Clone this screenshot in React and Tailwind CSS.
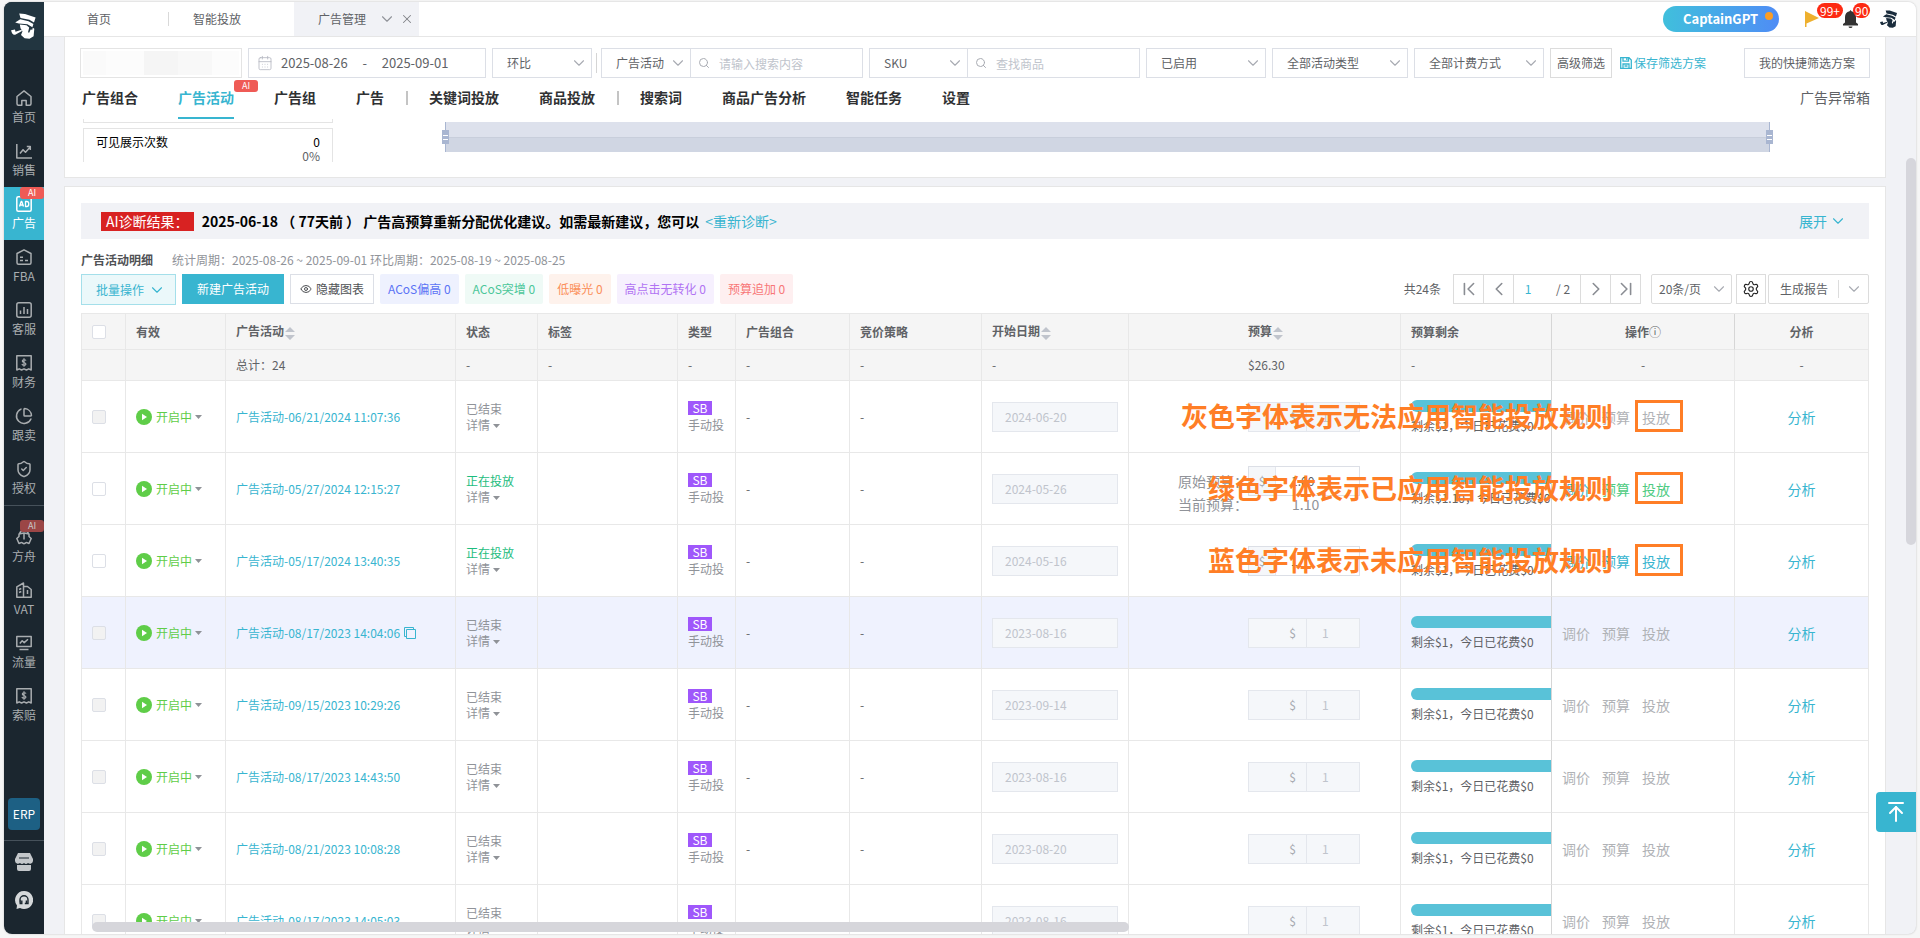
import { useState } from "react";
import {
    ArrowUpToLine,
    CalendarDays,
    ChartPie,
    ChevronDown,
    ChevronFirst,
    ChevronLast,
    ChevronLeft,
    ChevronRight,
    Eye,
    Search,
    Settings,
    ShieldCheck,
    X,
} from "lucide-react";

const campaigns = [
    { name: "广告活动-06/21/2024 11:07:36", date: "2024-06-20", budget: "1", left: "1", note: "灰色字体表示无法应用智能投放规则" },
    { name: "广告活动-05/27/2024 12:15:27", date: "2024-05-26", budget: "1.00", left: "1.10", current: "1.10", running: true, rule: "applied", note: "绿色字体表示已应用智能投放规则" },
    { name: "广告活动-05/17/2024 13:40:35", date: "2024-05-16", budget: "1", left: "1", running: true, rule: "available", note: "蓝色字体表示未应用智能投放规则" },
    { name: "广告活动-08/17/2023 14:04:06", date: "2023-08-16", budget: "1", left: "1", hovered: true },
    { name: "广告活动-09/15/2023 10:29:26", date: "2023-09-14", budget: "1", left: "1" },
    { name: "广告活动-08/17/2023 14:43:50", date: "2023-08-16", budget: "1", left: "1" },
    { name: "广告活动-08/21/2023 10:08:28", date: "2023-08-20", budget: "1", left: "1" },
    { name: "广告活动-08/17/2023 14:05:03", date: "2023-08-16", budget: "1", left: "1" },
];

const mainMenu = [
    { label: "首页", icon: "home" },
    { label: "销售", icon: "sales" },
    { label: "广告", icon: "ad", active: true, ai: true },
    { label: "FBA", icon: "fba" },
    { label: "客服", icon: "bars" },
    { label: "财务", icon: "bill" },
    { label: "跟卖", icon: "pie" },
    { label: "授权", icon: "shield" },
];

const toolMenu = [
    { label: "方舟", icon: "ark", ai: true },
    { label: "VAT", icon: "building" },
    { label: "流量", icon: "monitor" },
    { label: "索赔", icon: "bill" },
];

const adTabs = ["广告组合", "广告活动", "广告组", "广告", "|", "关键词投放", "商品投放", "|", "搜索词", "商品广告分析", "智能任务", "设置"];

const quickFilters = [
    { label: "ACoS偏高 0", tone: "bg-[#eef1fe] text-[#5b73f5]" },
    { label: "ACoS突增 0", tone: "bg-[#effaf6] text-[#4cc79a]" },
    { label: "低曝光 0", tone: "bg-[#fef2ec] text-[#fb8f5a]" },
    { label: "高点击无转化 0", tone: "bg-[#f6f0fe] text-[#b173f3]" },
    { label: "预算追加 0", tone: "bg-[#feeff0] text-[#f87777]" },
];

const columnWidths = ["w-[44px]", "w-[100px]", "w-[230px]", "w-[82px]", "", "w-[58px]", "w-[114px]", "w-[132px]", "w-[147px]", "w-[272px]", "w-[151px]", "w-[183px]", "w-[134px]"];

function CaptainLogo({ className }) {
    return (
        <svg viewBox="0 0 26 26" className={className} fill="currentColor" aria-hidden="true">
            <path d="M8.2.6 14 .9l10.600 3.500-1.600 5-4.600-2.600L9.500 5z" />
            <path d="M9.200 6.200l8.300 2.100 4.900 2.700-1 3.300-5-3-8.600-.9-3.600-.9z" />
            <path d="M8.800 11.600l6.700.7 2.700 2.300-1.100 4.300.9 1 1.700-3.300 1.600.2.500-2 1.500.9-.7 7.600-4.100 2.500-4.900-.6-3.600-3.100 1.500-3.800-2-3z" />
            <path d="M.1 17.200l3.900-.6.500 2.100 6-1.900.5 1.200-6.300 3.400C2.400 22.500.6 20.400.1 17.200z" />
        </svg>
    );
}

function MenuIcon({ name }) {
    if (name === "pie") return <ChartPie className="size-[18px]" strokeWidth={2} />;
    if (name === "shield") return <ShieldCheck className="size-[18px]" strokeWidth={2} />;

    return (
        <svg viewBox="0 0 16 16" className="my-px size-4" fill="none" stroke="currentColor" strokeWidth="1.500" strokeLinejoin="round" aria-hidden="true">
            {name === "home" && <path d="M10.200 15.200h3.300a1.500 1.500 0 0 0 1.500-1.500V6.500L8 .9 1 6.500v7.200a1.500 1.500 0 0 0 1.500 1.500h3.300v-4.700h4.400z" />}
            {name === "sales" && <path d="M.8 1v14H16M4 10.500l3-3.800 2.500 2.500 4.500-5M10.800 3.500h3.500V7" />}
            {name === "ad" && (
                <>
                    <rect x=".8" y=".8" width="14.400" height="14.400" rx="1.500" />
                    <path d="M3.500 10.500 5.200 5.500h.6l1.700 5M4 9h3M9.500 5.500v5h1.200a2 2 0 0 0 2-2v-1a2 2 0 0 0-2-2z" strokeWidth="1.300" />
                </>
            )}
            {name === "fba" && <path d="M1 4.500 8 .8l7 3.700v9.200a1.500 1.500 0 0 1-1.500 1.500h-11A1.500 1.500 0 0 1 1 13.700zM4 8.200h3M4 11.500h3M9 11.500h3" />}
            {name === "bars" && (
                <>
                    <rect x=".8" y=".8" width="14.400" height="14.400" rx="2" />
                    <path d="M4.500 8.500v3.500M8 5v7M11.500 7v5" />
                </>
            )}
            {name === "bill" && (
                <>
                    <path d="M.8 15V.8h14.400V15l-2.400-1.200-2.400 1.200L8 13.800 5.600 15l-2.400-1.200z" />
                    <path d="M10 5.500C9.500 4.500 6.300 4.300 6.300 6s3.600 1.300 3.600 3.100-3.400 1.600-4-.1M8 3.300v8.400" strokeWidth="1.200" />
                </>
            )}
            {name === "ark" && <path d="M8 4v6.500M3.500 5C4.500.2 11.500.2 12.500 5M8 4 3 5v2.500L.8 9.500 3 14.500c1.300 0 1.500-1 2.500-1s1.500 1.200 2.500 1.200 1.500-1.200 2.500-1.200 1.200 1 2.500 1l2.200-5L13 7.500V5z" />}
            {name === "building" && <path d="M.8 15.200V4.800L7.500 1v14.200zM7.500 4.500h4l3.700 3v7.700H7.500M3 7.500l2.300-1M3 10.500l2.300-1M11.500 8v4" />}
            {name === "monitor" && <path d="M.8 1.500h14.400v10H.8zM3.800 8.500l2.400-2.700 2 1.800 3.800-3.400M3.500 14.500h9" />}
        </svg>
    );
}

function MenuItem({ item }) {
    return (
        <a
            href="#"
            className={`relative flex h-[53px] flex-col items-center pt-2 text-xs ${
                item.active ? "bg-[#38b5d0] text-white" : "text-[#a9adb0]"
            }`}
        >
            {item.ai && (
                <span
                    className={`absolute top-0 right-0 h-3 w-6 rounded-[3px] text-center text-[9px] leading-3 ${
                        item.active ? "bg-[#ef5b56] text-white" : "bg-[#9b4646] text-[#c9c9c9]"
                    }`}
                >
                    AI
                </span>
            )}
            <MenuIcon name={item.icon} />
            <span className="mt-0.5 leading-4">{item.label}</span>
        </a>
    );
}

function Sidebar() {
    return (
        <aside className="flex w-10 shrink-0 flex-col bg-[#1b262f]">
            <div className="flex h-12 items-center justify-center bg-[#223540] text-white">
                <CaptainLogo className="size-[26px]" />
            </div>
            <nav className="mt-[31px] flex flex-col">
                {mainMenu.map((item) => (
                    <MenuItem key={item.label} item={item} />
                ))}
                <hr className="mb-3.5 border-[#46515a]" />
                {toolMenu.map((item) => (
                    <MenuItem key={item.label} item={item} />
                ))}
            </nav>
            <div className="mt-auto flex flex-col items-center pb-[25px]">
                <button className="size-8 rounded bg-[#1d6084] text-xs text-white">ERP</button>
                <hr className="mt-2.5 w-full border-[#46515a]" />
                <svg viewBox="0 0 18 18" className="mt-3 size-[18px] text-[#c3c7ca]" aria-hidden="true">
                    <path d="M3 0h12l3 6v2a3 3 0 0 1-5 2 3 3 0 0 1-4 0 3 3 0 0 1-4 0 3 3 0 0 1-5-2V6zM2 12h14v4a2 2 0 0 1-2 2H4a2 2 0 0 1-2-2z" fill="currentColor" />
                    <path d="M4 5h10" stroke="#1b262f" strokeWidth="1.200" />
                </svg>
                <svg viewBox="0 0 18 18" className="mt-5 size-[18px] text-[#d5d8da]" aria-hidden="true">
                    <path d="M9 0a9 9 0 1 1-4 17l-3.500 1 .5-3.500A9 9 0 0 1 9 0z" fill="currentColor" />
                    <path d="M5 11.500V8.800a4 4 0 0 1 8 0v3.700H9.800M5.200 9v3.500h1.600V9.500M11.400 9.500v2.500" fill="none" stroke="#1b262f" strokeWidth="1.400" />
                </svg>
            </div>
        </aside>
    );
}

function TopBar() {
    return (
        <header className="flex h-[35px] shrink-0 items-stretch border-b border-[#e6e6e6] bg-white text-xs text-[#606266]">
            <a href="#" className="my-2.5 flex w-[125px] items-center border-r border-[#d9d9d9] pl-[43px]">首页</a>
            <a href="#" className="flex w-[125px] items-center pl-6">智能投放</a>
            <div className="flex w-[125px] items-center bg-[#f1f2f6] pl-6">
                <a href="#">广告管理</a>
                <button aria-label="展开标签" className="ml-3"><ChevronDown className="size-[18px] text-[#909399]" strokeWidth={1.5} /></button>
                <button aria-label="关闭标签" className="ml-1"><X className="size-3.5 text-[#808288]" strokeWidth={1.75} /></button>
            </div>
            <div className="ml-auto flex items-center pr-[18px]">
                <button className="relative flex h-[26px] w-[116px] items-center rounded-full bg-linear-to-r from-[#40bfdc] to-[#4f8cf5] pl-5 text-[13px] font-bold text-white">
                    CaptainGPT
                    <span className="absolute top-1.5 right-1.5 size-2 rounded-full bg-[#fb9d25]" />
                </button>
                <button aria-label="旗标" className="relative ml-[26px]">
                    <svg viewBox="0 0 14 16" className="h-4 w-3.5" aria-hidden="true">
                        <path d="M0 0l14 7L1.500 12.500V16H0z" fill="#eeb02e" />
                    </svg>
                    <span className="absolute -top-2 left-3 h-[15px] rounded-full bg-[#fd2a12] px-[3px] text-xs leading-[15px] text-white">99+</span>
                </button>
                <button aria-label="通知" className="relative ml-6">
                    <svg viewBox="0 0 15 18" className="h-[18px] w-[15px]" fill="#333" aria-hidden="true">
                        <path d="M7.500 0l1 1.200c3 .5 4.500 2.800 4.500 5.800v5.500l2 1.500v1.500H0V14l2-1.500V7c0-3 1.500-5.300 4.500-5.800zM5.500 16.500h4a2 1.500 0 0 1-4 0z" />
                    </svg>
                    <span className="absolute -top-[7px] left-2.5 h-[15px] rounded-full bg-[#fd2a12] px-0.5 text-xs leading-[15px] text-white">90</span>
                </button>
                <CaptainLogo className="ml-[22px] size-[18px] text-[#1a2c3c]" />
            </div>
        </header>
    );
}

function Select({ label, className }) {
    return (
        <div className={`relative ${className}`}>
            <select aria-label={label} className="h-[30px] w-full appearance-none border border-[#dcdfe6] bg-white pr-6 pl-3.5 text-xs text-[#606266]">
                <option>{label}</option>
            </select>
            <ChevronDown className="pointer-events-none absolute top-1.5 right-1 size-[18px] text-[#a8abb2]" strokeWidth={1.5} />
        </div>
    );
}

function SearchBox({ placeholder }) {
    return (
        <div className="relative -ml-px w-[173px]">
            <Search className="absolute top-[9px] left-2 size-3 text-[#a8abb2]" strokeWidth={2} />
            <input
                aria-label={placeholder}
                placeholder={placeholder}
                className="h-[30px] w-full border border-[#dcdfe6] pl-7 text-xs placeholder:text-[#c0c4cc]"
            />
        </div>
    );
}

function FilterBar() {
    return (
        <div className="flex items-center gap-1.5 text-xs text-[#606266]">
            <button aria-label="店铺" className="h-[30px] w-[162px] border border-[#e4e4e4] p-0.5">
                <span className="flex h-full">
                    <span className="w-[15%] bg-[#fafafa]" />
                    <span className="w-[24%] bg-[#fcfcfc]" />
                    <span className="w-[22%] bg-[#f5f5f5]" />
                    <span className="w-[22%] bg-[#f8f8f8]" />
                    <span className="flex-1 bg-[#fcfcfc]" />
                </span>
            </button>
            <button className="flex h-[30px] w-[238px] items-center border border-[#dcdfe6] pl-2 text-[13px]">
                <CalendarDays className="size-4 text-[#b4b7c0]" strokeWidth={1.25} />
                <span className="ml-2">2025-08-26</span>
                <span className="w-[34px] text-center">-</span>
                <span>2025-09-01</span>
            </button>
            <Select label="环比" className="w-[100px]" />
            <span className="-mx-0.5 h-5 w-px bg-[#d5d5d5]" />
            <div className="flex">
                <Select label="广告活动" className="w-[90px]" />
                <SearchBox placeholder="请输入搜索内容" />
            </div>
            <div className="flex">
                <Select label="SKU" className="w-[99px]" />
                <SearchBox placeholder="查找商品" />
            </div>
            <Select label="已启用" className="w-[120px]" />
            <Select label="全部活动类型" className="w-[136px]" />
            <Select label="全部计费方式" className="w-[130px]" />
            <button className="h-[30px] border border-[#dcdcdc] px-1.5">高级筛选</button>
            <button className="ml-0.5 flex items-center gap-0.5 text-[#38b5d0]">
                <svg viewBox="0 0 12 12" className="size-3" fill="none" stroke="currentColor" strokeWidth="1.300" aria-hidden="true">
                    <path d="M.7.7H9l2.300 2.300v8.300H.7zM3 .7v3.500h5.500V.7M3 11V7h6v4M4.500 9h3M6.800 1v2" />
                </svg>
                保存筛选方案
            </button>
            <button className="ml-auto h-[30px] w-[126px] border border-[#dcdfe6]">我的快捷筛选方案</button>
        </div>
    );
}

function AdTabs() {
    return (
        <div className="mt-1.5 flex h-[35px] items-center pl-0.5 text-sm">
            {adTabs.map((tab, i) =>
                tab === "|" ? (
                    <span key={i} className="mr-[21px] -ml-[18px] h-3.5 w-0.5 -translate-y-1 bg-[#c4c4c4]" />
                ) : (
                    <a
                        key={tab}
                        href="#"
                        className={`relative mr-10 h-full leading-[26px] font-bold ${
                            tab === "广告活动" ? "border-b-2 border-[#38b5d0] text-[#38b5d0]" : "text-[#303133]"
                        }`}
                    >
                        {tab}
                        {tab === "广告活动" && (
                            <span className="absolute -top-1 left-full h-3 w-6 rounded-[3px] bg-[#ef5b56] text-center text-[9px] leading-3 font-normal text-white">AI</span>
                        )}
                    </a>
                )
            )}
            <a href="#" className="ml-auto h-full leading-[26px] text-[#606266]">广告异常箱</a>
        </div>
    );
}

function ZoomHandle() {
    return (
        <span className="z-10 flex h-3.5 w-[7px] flex-col items-center justify-center gap-[3px] bg-[#a9b6d1]">
            <span className="h-px w-[5px] bg-white" />
            <span className="h-px w-[5px] bg-white" />
        </span>
    );
}

function ChartStrip() {
    return (
        <div className="flex h-[43px] items-start overflow-hidden pl-[3px]">
            <div className="w-[250px] shrink-0">
                <div className="h-1 border-x border-b border-[#e4e4e4]" />
                <div className="mt-[5px] h-16 border border-[#e4e4e4] px-3 pt-[5px] text-xs text-black">
                    <div className="flex justify-between leading-4">
                        <span>可见展示次数</span>
                        <span>0</span>
                    </div>
                    <div className="text-right leading-3 text-[#606266]">0%</div>
                </div>
            </div>
            <div className="mt-[3px] mr-[97px] ml-[109px] flex h-[30px] flex-1 items-center">
                <ZoomHandle />
                <div className="-mx-1 flex h-full flex-1 flex-col border-x border-[#a9b6d1] bg-[#dde1ec]">
                    <div className="mt-auto h-[15px] border-t border-[#c8cedb] bg-[#d0d6e3]" />
                </div>
                <ZoomHandle />
            </div>
        </div>
    );
}

function Pagination() {
    const cell = "flex h-full items-center border-l border-[#dcdcdc] text-[#8a8d93]";
    return (
        <div className="ml-auto flex items-center text-xs text-[#606266]">
            <span>共24条</span>
            <div className="ml-3 flex h-[30px] border-y border-r border-[#dcdcdc]">
                <button aria-label="首页" className={`w-[30px] justify-center ${cell}`}><ChevronFirst className="size-[22px]" strokeWidth={1.75} /></button>
                <button aria-label="上一页" className={`w-[30px] justify-center ${cell}`}><ChevronLeft className="size-[22px]" strokeWidth={1.75} /></button>
                <div className={`w-[67px] ${cell}`}>
                    <input aria-label="页码" defaultValue="1" className="w-7 text-center text-xs text-[#38b5d0]" />
                    <span className="ml-3.5 text-[#606266]">/ 2</span>
                </div>
                <button aria-label="下一页" className={`w-[30px] justify-center ${cell}`}><ChevronRight className="size-[22px]" strokeWidth={1.75} /></button>
                <button aria-label="末页" className={`w-[30px] justify-center ${cell}`}><ChevronLast className="size-[22px]" strokeWidth={1.75} /></button>
            </div>
            <div className="relative ml-2.5 w-[81px]">
                <select aria-label="每页条数" className="h-[30px] w-full appearance-none rounded-[2px] border border-[#dcdcdc] pl-[7px]">
                    <option>20条/页</option>
                </select>
                <ChevronDown className="pointer-events-none absolute top-1.5 right-1 size-[18px] text-[#a8abb2]" strokeWidth={1.5} />
            </div>
            <button aria-label="设置" className="ml-1 flex size-[30px] items-center justify-center border border-[#dcdcdc] text-[#222]">
                <Settings className="size-[18px]" strokeWidth={1.5} />
            </button>
            <button className="ml-0.5 flex h-[30px] w-[101px] items-center rounded-[2px] border border-[#dcdcdc] pl-[11px]">
                生成报告
                <span className="ml-2.5 h-[18px] w-px bg-[#dcdcdc]" />
                <ChevronDown className="ml-1.5 size-[18px] text-[#a8abb2]" strokeWidth={1.5} />
            </button>
        </div>
    );
}

function Caret() {
    return (
        <svg viewBox="0 0 7 4" className="ml-[3px] inline-block h-1 w-[7px] align-middle" aria-hidden="true">
            <path d="M0 0h7L3.500 4z" fill="#8f9297" />
        </svg>
    );
}

function SortIcon() {
    return (
        <svg viewBox="0 0 10 13" className="ml-px inline-block h-[13px] w-2.5 align-middle" fill="#c0c4cc" aria-hidden="true">
            <path d="M0 5h10L5 0zM0 8h10l-5 5z" />
        </svg>
    );
}

function Checkbox({ label, disabled }) {
    return (
        <input
            type="checkbox"
            aria-label={label}
            disabled={disabled}
            className="block size-3.5 appearance-none rounded-[2px] border border-[#dcdfe6] bg-white disabled:bg-[#f2f2f2]"
        />
    );
}

function BudgetCell({ row, editable }) {
    return (
        <div className="grid grid-cols-[70px_112px] pl-[49px] text-sm leading-4 text-[#909399]">
            <span className="self-center">{row.current && "原始预算："}</span>
            <div className={`flex h-[30px] border text-xs ${editable ? "border-[#dcdfe6] text-[#606266]" : "border-[#e4e7ed] text-[#c0c4cc]"}`}>
                <span
                    className={`flex items-center border-r border-[#e4e7ed] bg-[#f5f7fa] text-[#a8abb2] ${
                        editable ? "w-[27px] justify-center" : "w-[58px] justify-end pr-2.5"
                    }`}
                >
                    $
                </span>
                <input
                    aria-label={`预算 ${row.name}`}
                    defaultValue={row.budget}
                    disabled={!editable}
                    className="min-w-0 flex-1 pl-[15px] disabled:bg-[#f5f7fa]"
                />
            </div>
            {row.current && (
                <>
                    <span>当前预算：</span>
                    <span className="pl-11">{row.current}</span>
                </>
            )}
        </div>
    );
}

function CampaignRow({ row }) {
    const actionTone = row.rule ? "text-[#38b5d0]" : "text-[#b0b2b6]";
    const ruleTone = row.rule === "applied" ? "text-[#4ecb82]" : actionTone;

    return (
        <tr className={row.hovered ? "bg-[#eff2fe]" : "bg-white"}>
            <td><Checkbox label={row.name} disabled={!row.rule} /></td>
            <td>
                <button className="flex items-center text-[#5fcd48]">
                    <svg viewBox="0 0 16 16" className="mr-1 size-4" aria-hidden="true">
                        <circle cx="8" cy="8" r="8" fill="#5fcd48" />
                        <path d="M6 4.800 11 8l-5 3.200z" fill="#fff" />
                    </svg>
                    开启中
                    <Caret />
                </button>
            </td>
            <td>
                <div className="flex items-center gap-1 text-[#38b5d0]">
                    <a href="#">{row.name}</a>
                    {row.hovered && (
                        <button aria-label="复制">
                            <svg viewBox="0 0 12 12" className="size-3" fill="none" stroke="currentColor" aria-hidden="true">
                                <path d="M2.500 2.500h9v9h-9zM9.500 2.500v-2h-9v9h2" />
                            </svg>
                        </button>
                    )}
                </div>
            </td>
            <td className="leading-4 text-[#909399]">
                <div className={row.running ? "text-[#1dbd7e]" : ""}>{row.running ? "正在投放" : "已结束"}</div>
                <button>详情<Caret /></button>
            </td>
            <td />
            <td className="leading-4 text-[#909399]">
                <span className="block w-6 bg-[#9f57fb] text-center leading-3.5 text-white">SB</span>
                <div className="mt-0.5">手动投</div>
            </td>
            <td>-</td>
            <td>-</td>
            <td>
                <input
                    aria-label={`开始日期 ${row.name}`}
                    defaultValue={row.date}
                    disabled
                    className="block h-[30px] w-[126px] border border-[#e4e7ed] bg-[#f5f7fa] pl-3 text-[#c0c4cc]"
                />
            </td>
            <td className="!pl-0"><BudgetCell row={row} editable={Boolean(row.rule)} /></td>
            <td className="overflow-hidden !border-r-[#d6d6d6] whitespace-nowrap">
                <div className="h-3 rounded-l-full bg-[#59c2d8]" />
                <div className="mt-1.5 leading-4">剩余${row.left}，今日已花费$0</div>
            </td>
            <td className="relative">
                <div className={`flex gap-3 text-sm ${actionTone}`}>
                    <button>调价</button>
                    <button className={ruleTone}>预算</button>
                    <button className={ruleTone}>投放</button>
                </div>
                {row.note && (
                    <div className="pointer-events-none absolute inset-y-0 right-[51px] flex items-center gap-[22px] pb-0.5 text-[27px] font-bold whitespace-nowrap text-[#ff7e26]">
                        {row.note}
                        <span className="h-8 w-12 border-3 border-[#ff7e26]" />
                    </div>
                )}
            </td>
            <td className="!pl-0 text-center"><a href="#" className="text-sm text-[#38b5d0]">分析</a></td>
        </tr>
    );
}

function CampaignTable() {
    return (
        <table className="mt-2 w-full table-fixed border-separate border-spacing-0 border-t border-l border-[#e8e8e8] text-left text-xs text-[#606266] [&_td]:border-r [&_td]:border-b [&_td]:border-[#e8e8e8] [&_td]:py-0 [&_td]:pl-2.5 [&_th]:border-r [&_th]:border-b [&_th]:border-[#e8e8e8] [&_th]:py-0 [&_th]:pl-2.5">
            <colgroup>
                {columnWidths.map((width, i) => (
                    <col key={i} className={width} />
                ))}
            </colgroup>
            <thead className="bg-[#f5f5f5]">
                <tr className="h-9">
                    <th><Checkbox label="全选" /></th>
                    <th>有效</th>
                    <th>广告活动<SortIcon /></th>
                    <th>状态</th>
                    <th>标签</th>
                    <th>类型</th>
                    <th>广告组合</th>
                    <th>竞价策略</th>
                    <th>开始日期<SortIcon /></th>
                    <th className="!pl-[119px]">预算<SortIcon /></th>
                    <th className="!border-r-[#d6d6d6]">预算剩余</th>
                    <th className="!border-r-[#d6d6d6] !pl-0 text-center">操作<span className="font-normal">ⓘ</span></th>
                    <th className="!pl-0 text-center">分析</th>
                </tr>
                <tr className="h-[31px]">
                    <td />
                    <td />
                    <td>总计：24</td>
                    <td>-</td>
                    <td>-</td>
                    <td>-</td>
                    <td>-</td>
                    <td>-</td>
                    <td>-</td>
                    <td className="!pl-[119px]">$26.30</td>
                    <td className="!border-r-[#d6d6d6]">-</td>
                    <td className="!pl-0 text-center">-</td>
                    <td className="!pl-0 text-center">-</td>
                </tr>
            </thead>
            <tbody className="[&_tr]:h-[72px]">
                {campaigns.map((row) => (
                    <CampaignRow key={row.name} row={row} />
                ))}
            </tbody>
        </table>
    );
}

export default function App() {
    const [showChart, setShowChart] = useState(true);

    return (
        <div className="h-screen bg-[#f6f6f6] px-1 pt-0.5 pb-1 font-['Noto_Sans_CJK_SC',sans-serif]">
            <div className="relative flex h-full overflow-hidden rounded-lg bg-[#f1f2f6] shadow-[0_0_2px_#bbb]">
                <Sidebar />
                <div className="flex min-w-0 flex-1 flex-col">
                    <TopBar />
                    <main className="flex min-h-0 flex-1 flex-col gap-2 pr-[30px] pl-5">
                        <section className="shrink-0 border-x border-b border-[#e6e6e6] bg-white px-[15px] pt-[11px] pb-[15px]">
                            <FilterBar />
                            <AdTabs />
                            {showChart && <ChartStrip />}
                        </section>

                        <section className="relative min-h-0 flex-1 overflow-hidden border-x border-t border-[#e6e6e6] bg-white px-4 pt-4">
                            <div className="flex h-9 items-center bg-[#f1f2f6] pl-5 text-sm">
                                <span className="bg-[#d82222] px-[5px] leading-[19px] text-white">AI诊断结果：</span>
                                <strong className="ml-2 text-black">2025-06-18 （ 77天前 ） 广告高预算重新分配优化建议。如需最新建议，您可以</strong>
                                <a href="#" className="ml-1.5 text-[#38b5d0]">&lt;重新诊断&gt;</a>
                                <button className="mr-[22px] ml-auto flex items-center gap-0.5 text-[#38b5d0]">
                                    展开
                                    <ChevronDown className="size-[18px]" strokeWidth={1.5} />
                                </button>
                            </div>
                            <div className="mt-3 flex items-center text-xs leading-[18px] text-[#909399]">
                                <h2 className="font-bold text-[#505255]">广告活动明细</h2>
                                <p className="ml-[19px]">统计周期：2025-08-26 ~ 2025-09-01 环比周期：2025-08-19 ~ 2025-08-25</p>
                            </div>
                            <div className="mt-[5px] flex items-start gap-1.5 text-xs">
                                <button className="flex h-[31px] w-[95px] items-center gap-1 border border-[#a4dfea] bg-[#ebf8fa] pl-3.5 text-[#38b5d0]">
                                    批量操作
                                    <ChevronDown className="size-[18px] shrink-0" strokeWidth={1.5} />
                                </button>
                                <button className="h-[30px] w-[102px] bg-[#38b5d0] text-white">新建广告活动</button>
                                <button
                                    onClick={() => setShowChart(!showChart)}
                                    className="flex h-[30px] w-[84px] items-center justify-center gap-1 border border-[#dcdfe6] text-[#505255]"
                                >
                                    <Eye className="size-3 shrink-0" strokeWidth={2} />
                                    隐藏图表
                                </button>
                                {quickFilters.map((filter) => (
                                    <button key={filter.label} className={`h-[30px] rounded-[2px] px-2 ${filter.tone}`}>
                                        {filter.label}
                                    </button>
                                ))}
                                <Pagination />
                            </div>
                            <CampaignTable />
                            <div className="absolute bottom-0.5 left-[27px] h-2.5 w-[57%] rounded-full bg-[#d6d6db]" />
                        </section>
                    </main>
                </div>
                <div className="absolute top-[156px] right-0 h-[387px] w-2.5 rounded-full bg-[#d6d6dc]" />
                <button aria-label="回到顶部" className="absolute right-0 bottom-[102px] flex size-10 items-center justify-center rounded-l bg-[#38b5d0] text-white">
                    <ArrowUpToLine className="size-6" strokeWidth={2} />
                </button>
            </div>
        </div>
    );
}
